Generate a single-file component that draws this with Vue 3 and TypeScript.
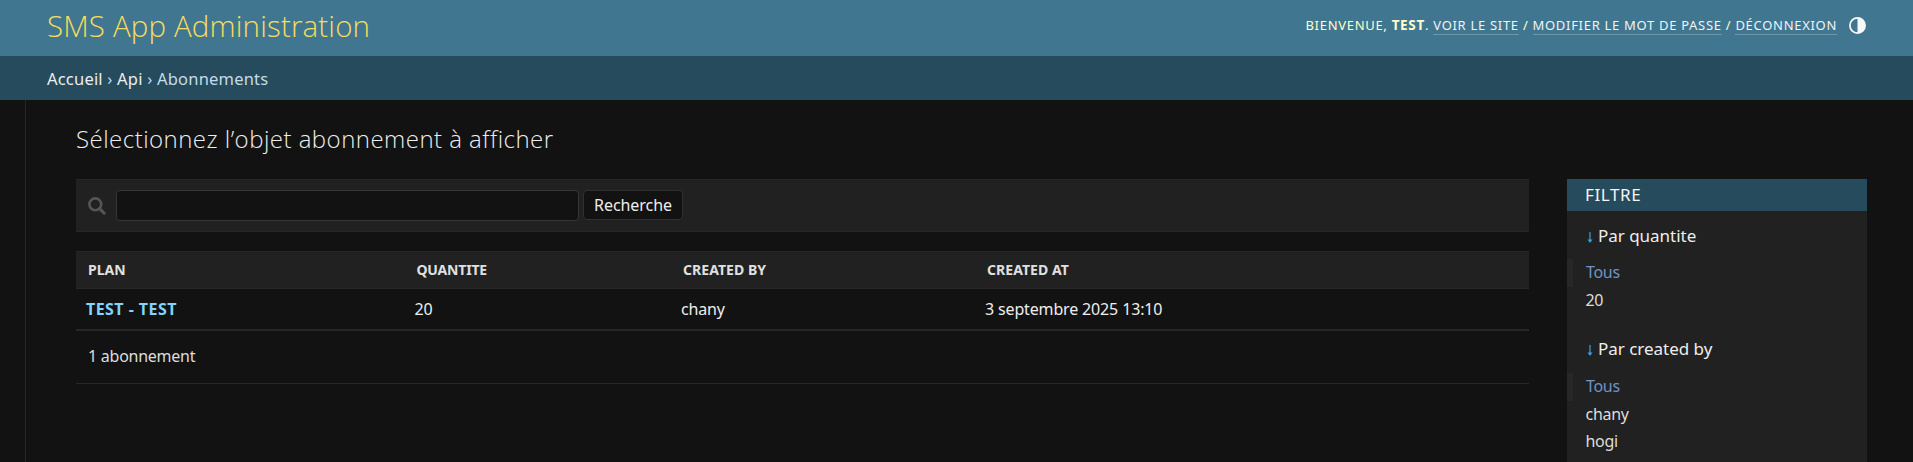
<script setup lang="ts">
interface FilterGroup { title: string; options: string[]; cls: string }

const columns: string[] = ['Plan', 'Quantite', 'Created by', 'Created at']
const rows: string[][] = [['TEST - TEST', '20', 'chany', '3 septembre 2025 13:10']]
const filters: FilterGroup[] = [
  { title: 'Par quantite', options: ['Tous', '20'], cls: 'quantite' },
  { title: 'Par created by', options: ['Tous', 'chany', 'hogi'], cls: 'created-by' },
]
</script>

<template>
  <div class="page">
    <header class="header">
      <h1 class="site-name">SMS App Administration</h1>
      <div class="user-area">
        <div class="user-tools">
          Bienvenue, <strong>test</strong>. <a>Voir le site</a> / <a>Modifier le mot de passe</a> / <a>Déconnexion</a>
        </div>
        <svg class="theme-icon" viewBox="0 0 17 17" width="17" height="17">
          <circle cx="8.5" cy="8.5" r="7.6" fill="none" stroke="#f8f8f8" stroke-width="1.7" />
          <path d="M8.5 1a7.5 7.5 0 0 1 0 15z" fill="#f8f8f8" />
        </svg>
      </div>
    </header>

    <nav class="breadcrumbs"><a>Accueil</a> › <a>Api</a> › Abonnements</nav>

    <div class="main">
      <div class="rail"></div>
      <main class="content">
        <h2 class="title">Sélectionnez l’objet abonnement à afficher</h2>
        <div class="columns">
          <section class="changelist">
            <form class="toolbar" @submit.prevent>
              <svg class="search-icon" viewBox="0 0 18 18" width="18" height="18">
                <circle cx="7.3" cy="7.3" r="5.9" fill="none" stroke="#555" stroke-width="2.6" />
                <path d="M11.6 11.6l4.6 4.6" stroke="#555" stroke-width="3" stroke-linecap="round" />
              </svg>
              <input class="searchbar" type="text" />
              <button class="search-button" type="submit">Recherche</button>
            </form>
            <div class="table">
              <div class="row head">
                <div v-for="c in columns" :key="c">{{ c }}</div>
              </div>
              <div v-for="r in rows" :key="r[0]" class="row body">
                <div v-for="cell in r" :key="cell">{{ cell }}</div>
              </div>
            </div>
            <p class="paginator">1 abonnement</p>
          </section>
          <aside class="filter">
            <h2 class="filter-title">Filtre</h2>
            <div v-for="f in filters" :key="f.title" class="group" :class="f.cls">
              <h3 class="summary"><svg width="6" height="12" viewBox="0 0 6 12">
                <path d="M3 0v9" stroke="#3ba0dc" stroke-width="1.2" />
                <path d="M.5 7.5h5L3 11z" fill="#3ba0dc" />
              </svg>{{ f.title }}</h3>
              <ul>
                <li v-for="(o, i) in f.options" :key="o" :class="{ selected: i === 0 }">{{ o }}</li>
              </ul>
            </div>
          </aside>
        </div>
      </main>
    </div>
  </div>
</template>

<style>
body { background: #121212; }
</style>

<style scoped>
* { box-sizing: border-box; margin: 0; padding: 0; }
.page {
  height: 462px; overflow: hidden; display: flex; flex-direction: column;
  background: #121212; color: #eee; font: 16px/20px "Noto Sans", "Open Sans", sans-serif;
}
.header {
  height: 56px; flex: none; padding: 0 47px; background: #417690; color: #ffc;
  display: flex; justify-content: space-between; align-items: flex-start;
}
.site-name {
  font: 300 29.5px/52px "Open Sans", sans-serif; letter-spacing: .15px; color: #f5dd5d; white-space: nowrap;
}
.user-area { display: flex; align-items: center; gap: 12px; height: 50px; }
.user-tools {
  font: 400 13px/50px "Noto Sans", sans-serif; letter-spacing: .7px; text-transform: uppercase; white-space: nowrap;
}
.user-tools strong { font-weight: 700; font-size: 13.5px; line-height: 1; }
.user-tools a { color: #eef4f7; border-bottom: 1px solid rgba(255, 255, 255, .25); }
.breadcrumbs {
  height: 44px; flex: none; padding: 0 47px; background: #264b5d; color: #c4dce8;
  font-size: 16.5px; line-height: 45px; letter-spacing: .2px;
}
.breadcrumbs a { color: #eee; }
.main { flex: 1; display: flex; min-height: 0; }
.rail { width: 26px; flex: none; border-right: 1px solid #272727; }
.content { flex: 1; padding: 20px 46px 0 50px; }
.title {
  height: 59px; font: 300 24px/38px "Open Sans", sans-serif; letter-spacing: .47px; color: #eee;
}
.columns { display: flex; gap: 38px; }
.changelist { width: 1453px; }
.toolbar {
  height: 53px; margin-bottom: 19px; padding: 10px 11px 0 12px; display: flex; align-items: flex-start;
  background: #212121; border: solid #272727; border-width: 1px 0;
}
.search-icon { margin: 7px 10px 0 0; }
.searchbar {
  width: 463px; height: 31px; margin-right: 4px; background: #121212; border: 1px solid #353535; border-radius: 4px;
}
.search-button {
  width: 100px; height: 30px; background: #121212; border: 1px solid #303030; border-radius: 4px;
  color: #eee; font: 16px/28px "Noto Sans", sans-serif; letter-spacing: -.05px;
}
.row { display: grid; grid-template-columns: 328.5px 266.5px 304px 1fr; }
.head {
  height: 38px; background: #212121; border: solid #272727; border-width: 1px 0; color: #e0e0e0;
  font-size: 14px; font-weight: 700; line-height: 36px; text-transform: uppercase; letter-spacing: .05px;
}
.head > div { padding-left: 12px; }
.head > div:nth-child(2) { letter-spacing: -.2px; }
.body { height: 42px; border-bottom: 2px solid #272727; line-height: 41px; letter-spacing: -.15px; }
.body > div { padding-left: 10px; }
.body > div:first-child { color: #81d4fa; font-weight: 700; letter-spacing: .45px; }
.paginator {
  height: 53px; padding-left: 12px; border-bottom: 1px solid #272727; line-height: 51px;
  letter-spacing: -.25px; color: #ddd;
}
.filter { width: 300px; height: 400px; background: #212121; }
.filter-title {
  height: 32px; padding-left: 18px; background: #264b5d; color: #f5f5f5;
  font-size: 17px; font-weight: 400; line-height: 31px; letter-spacing: .6px; text-transform: uppercase;
}
.summary {
  display: flex; align-items: center; gap: 5px; padding-left: 20px; height: 30px;
  font-size: 17px; font-weight: 400; line-height: 30px; letter-spacing: -.02px;
}
.summary svg { margin-top: 3px; }
.quantite .summary { margin-top: 10px; }
.created-by .summary { margin-top: 19px; }
.group ul { list-style: none; margin-top: 8px; }
.created-by ul { margin-top: 9px; }
.group li {
  height: 28px; padding-left: 18.5px; line-height: 27px; letter-spacing: -.3px; color: #ddd;
}
.created-by li { height: 27.5px; }
.group li.selected { padding-left: 13px; border-left: 6px solid #272727; color: #6f94c6; }
</style>
